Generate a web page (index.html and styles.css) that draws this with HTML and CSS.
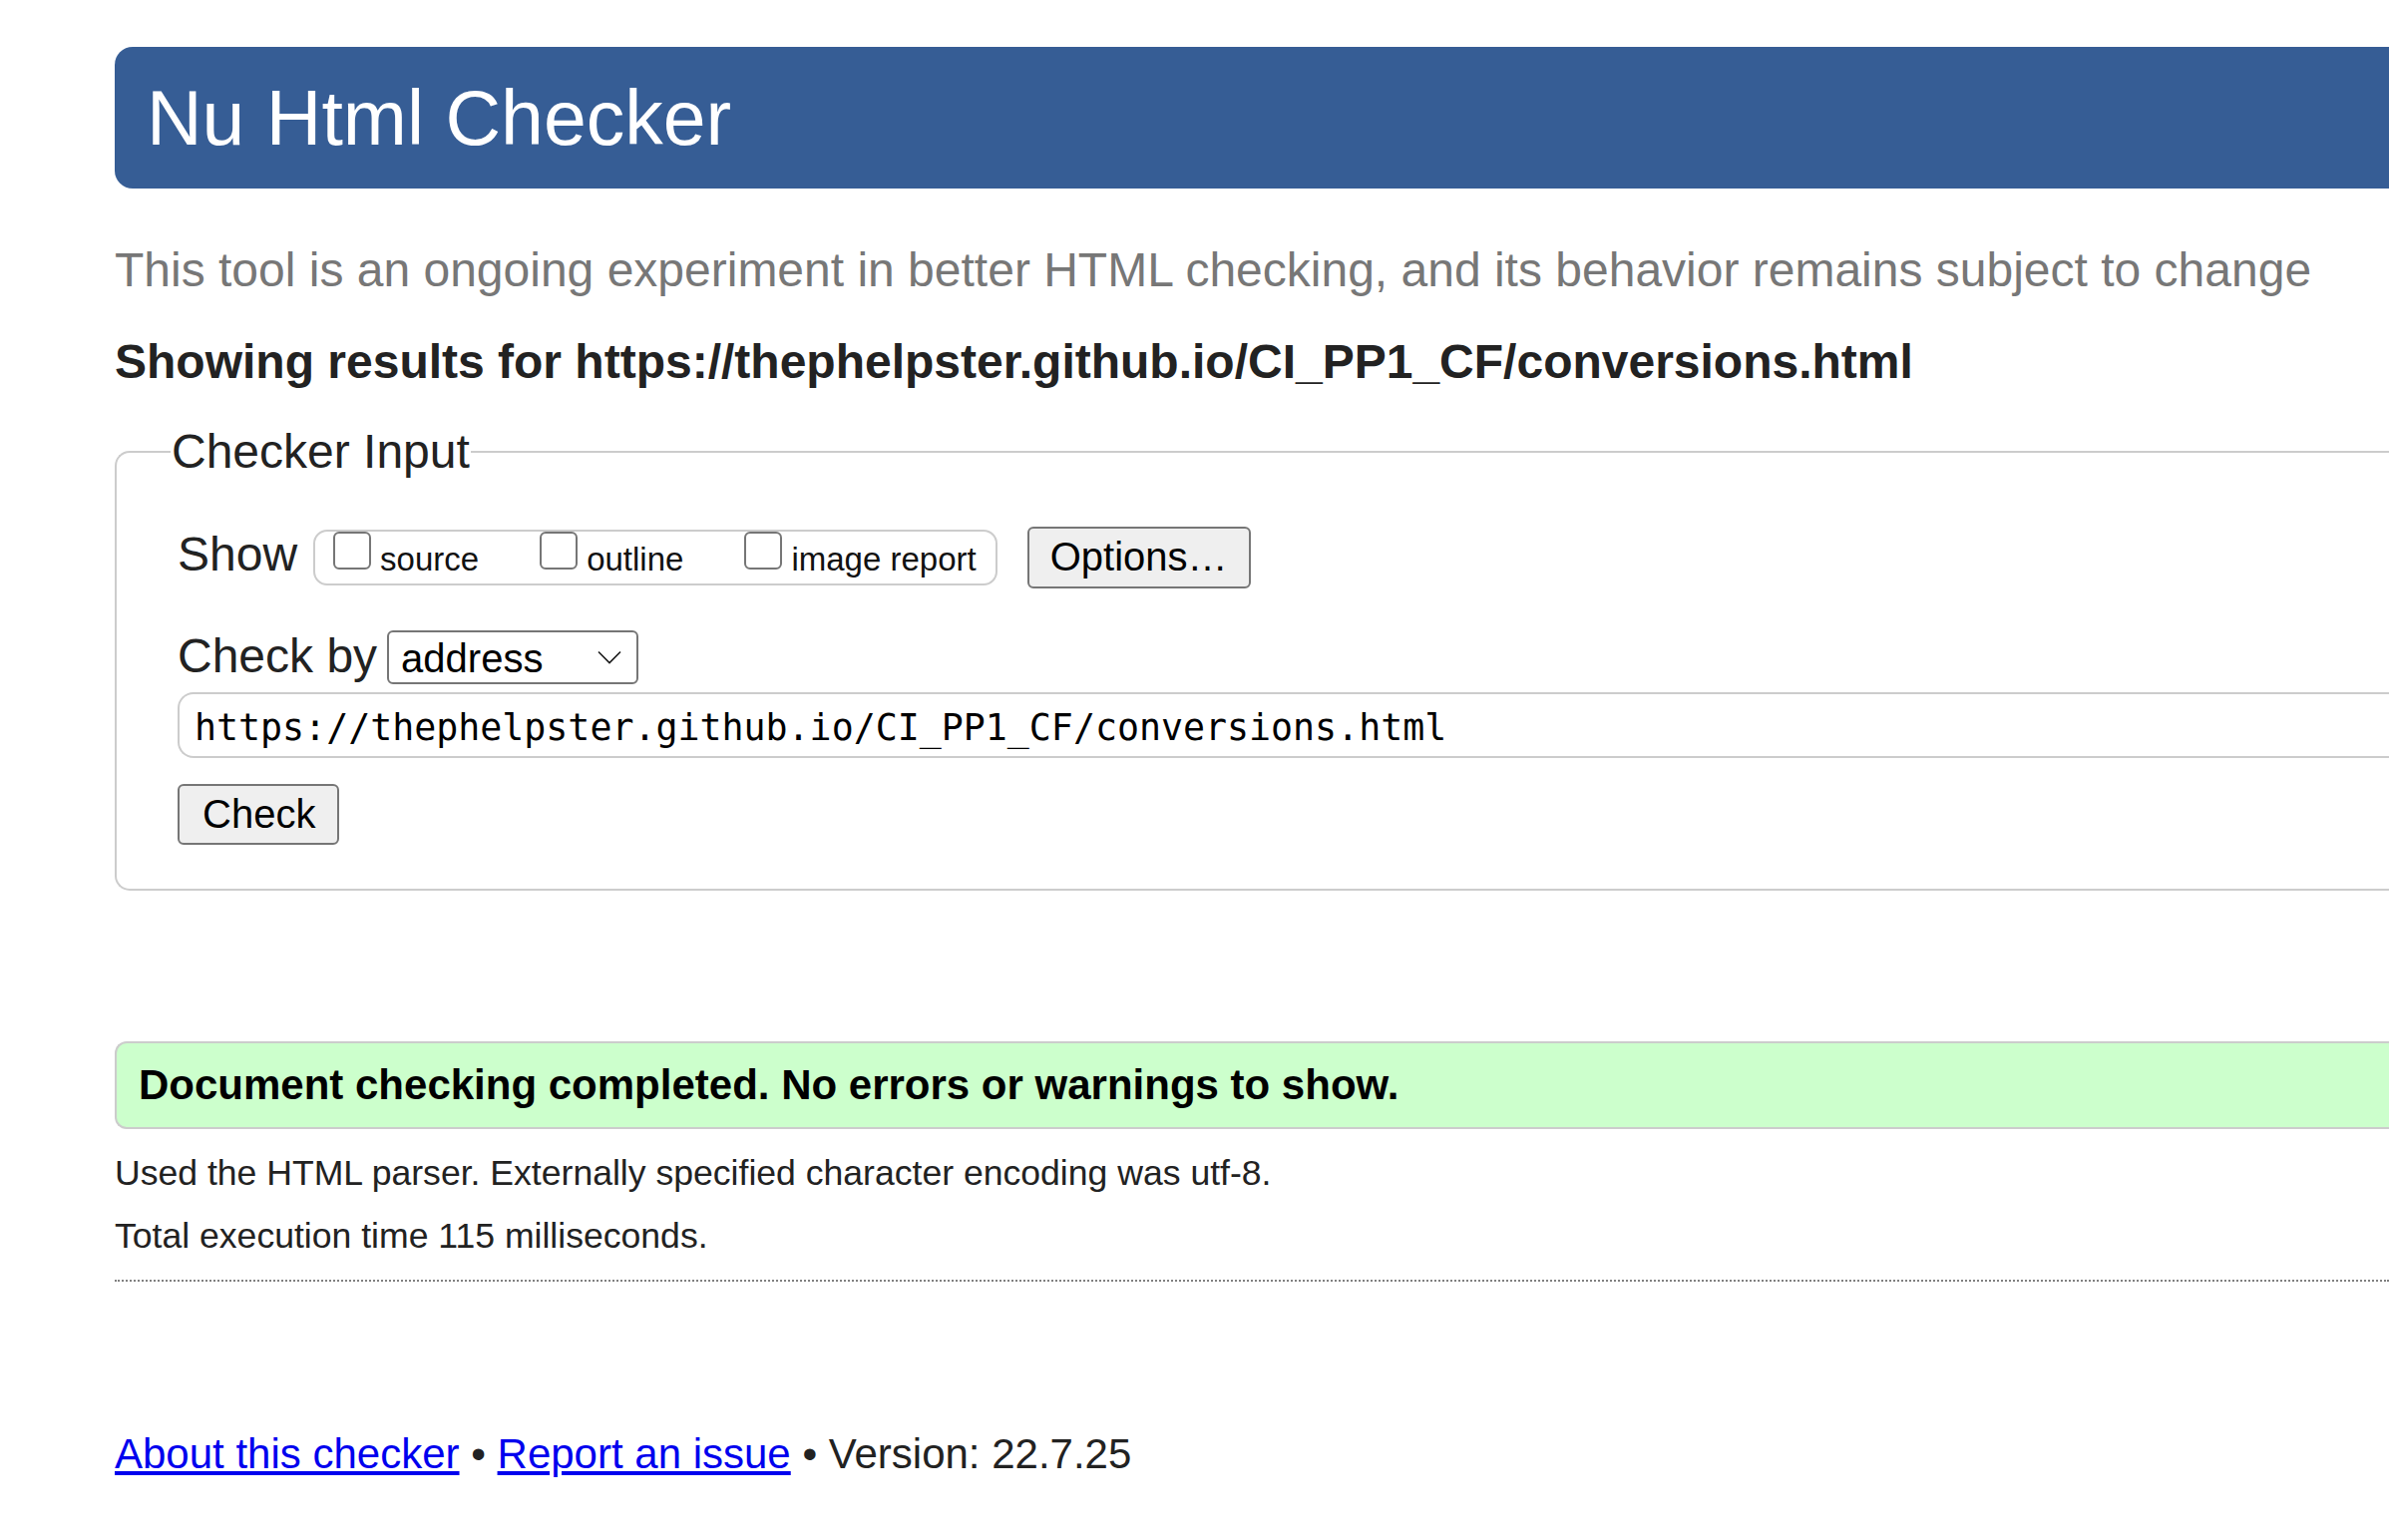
FILE: index.html
```html
<!DOCTYPE html>
<html lang="en">
<head>
<meta charset="utf-8">
<title>Showing results for https://thephelpster.github.io/CI_PP1_CF/conversions.html - Nu Html Checker</title>
<link rel="stylesheet" href="styles.css">
</head>
<body>
<div class="page">
  <h1 class="title">Nu Html Checker</h1>
  <p class="tagline">This tool is an ongoing experiment in better HTML checking, and its behavior remains subject to change</p>
  <h2 class="results-for">Showing results for https://thephelpster.github.io/CI_PP1_CF/conversions.html</h2>
  <form class="checker-form" action="#">
    <fieldset class="checker-input">
      <legend class="legend">Checker Input</legend>
      <div class="row row-show">
        <span class="row-label label-show">Show</span>
        <div class="show-group">
          <label class="show-opt"><input type="checkbox" class="cb"><span class="opt-text">source</span></label>
          <label class="show-opt"><input type="checkbox" class="cb"><span class="opt-text">outline</span></label>
          <label class="show-opt"><input type="checkbox" class="cb"><span class="opt-text">image report</span></label>
        </div>
        <button type="button" class="btn btn-options">Options…</button>
      </div>
      <div class="row row-checkby">
        <span class="row-label label-checkby">Check by</span>
        <div class="select">
          <span class="select-value">address</span>
          <svg class="chevron" width="24" height="14" viewBox="0 0 24 14" aria-hidden="true"><path d="M1 1.5 L12 12.5 L23 1.5" fill="none" stroke="#1a1a1a" stroke-width="1.6"/></svg>
        </div>
      </div>
      <input class="url" type="url" value="https://thephelpster.github.io/CI_PP1_CF/conversions.html">
      <div class="row row-submit">
        <button type="submit" class="btn btn-check">Check</button>
      </div>
    </fieldset>
  </form>
  <div class="success"><p class="success-text">Document checking completed. No errors or warnings to show.</p></div>
  <p class="details details-first">Used the HTML parser. Externally specified character encoding was utf-8.</p>
  <p class="details details-second">Total execution time 115 milliseconds.</p>
  <hr class="sep">
  <p class="footer"><a class="footer-link" href="#">About this checker</a> • <a class="footer-link" href="#">Report an issue</a> • Version: 22.7.25</p>
</div>
</body>
</html>
```
FILE: styles.css
```css
html, body {
  margin: 0;
  padding: 0;
  background: #fff;
}

body {
  font-family: "Liberation Sans", Arial, sans-serif;
  color: #222;
}

.page {
  padding: 47px 0 40px 115px;
}

.title {
  margin: 0;
  background: #365d95;
  color: #fff;
  font-weight: normal;
  font-size: 77px;
  line-height: 87px;
  padding: 28px 0 27px 32px;
  border-radius: 18px 0 0 18px;
  white-space: nowrap;
}

.tagline {
  margin: 54px 0 0;
  color: #777;
  font-size: 48px;
  line-height: 56px;
  white-space: nowrap;
}

.results-for {
  margin: 36px 0 0;
  font-size: 48px;
  line-height: 56px;
  font-weight: bold;
  color: #222;
  white-space: nowrap;
}

.checker-form {
  margin: 0;
}

.checker-input {
  margin: 34px 0 0;
  border: 2px solid #ccc;
  border-right: none;
  border-radius: 15px 0 0 15px;
  padding: 46px 0 44px 61px;
  min-width: 0;
}

.legend {
  font-size: 48px;
  line-height: 56px;
  padding: 0 1px;
  margin-left: -7px;
  color: #222;
}

.row {
  display: flex;
  align-items: flex-start;
}

.row-label {
  font-size: 48px;
  line-height: 56px;
  color: #222;
  white-space: nowrap;
}

.label-show {
  margin-right: 16px;
  margin-top: 1px;
}

.label-checkby {
  margin-right: 10px;
  margin-top: 3px;
}

.show-group {
  display: flex;
  align-items: flex-start;
  gap: 61px;
  height: 52px;
  margin-top: 4px;
  padding: 0 19px 0 18px;
  border: 2px solid #ccc;
  border-radius: 14px;
}

.show-opt {
  display: flex;
  align-items: flex-start;
  gap: 9px;
}

.cb {
  -webkit-appearance: none;
  appearance: none;
  box-sizing: border-box;
  width: 38px;
  height: 38px;
  margin: 0;
  flex: none;
  border: 2px solid #767676;
  border-radius: 6px;
  background: #fff;
}

.opt-text {
  font-size: 33px;
  line-height: 38px;
  margin-top: 9px;
  color: #111;
  white-space: nowrap;
}

.btn {
  font-family: "Liberation Sans", Arial, sans-serif;
  font-size: 40px;
  line-height: 46px;
  color: #000;
  background: #efefef;
  border: 2px solid #767676;
  border-radius: 6px;
  padding: 5px 21px 7px;
  margin: 0;
}

.btn-options {
  margin-left: 30px;
  margin-top: 1px;
}

.row-checkby {
  margin-top: 37px;
}

.select {
  box-sizing: border-box;
  width: 252px;
  height: 54px;
  margin-top: 5px;
  display: flex;
  align-items: center;
  justify-content: space-between;
  padding: 0 15px 0 12px;
  border: 2px solid #767676;
  border-radius: 6px;
  background: #fff;
}

.select-value {
  font-size: 40px;
  line-height: 46px;
  color: #000;
  padding-top: 2px;
}

.chevron {
  display: block;
  flex: none;
}

.url {
  display: block;
  box-sizing: border-box;
  width: 100%;
  height: 66px;
  margin: 8px 0 0;
  padding: 4px 15px 0;
  border: 2px solid #ccc;
  border-right: none;
  border-radius: 16px 0 0 16px;
  font-family: "DejaVu Sans Mono", "Liberation Mono", monospace;
  font-size: 36.6px;
  color: #000;
  background: #fff;
  outline: none;
}

.row-submit {
  margin-top: 26px;
}

.btn-check {
  padding: 5px 22px 6px 23px;
}

.success {
  margin-top: 151px;
  background: #ccffcc;
  border: 2px solid #ccc;
  border-right: none;
  border-radius: 12px 0 0 12px;
  padding: 18px 0 18px 22px;
}

.success-text {
  margin: 0;
  font-size: 42px;
  line-height: 48px;
  font-weight: bold;
  color: #000;
  white-space: nowrap;
}

.details {
  margin: 0;
  font-size: 35.6px;
  line-height: 40px;
  color: #222;
  white-space: nowrap;
}

.details-first {
  margin-top: 24px;
}

.details-second {
  margin-top: 23px;
}

.sep {
  margin: 24px 0 0;
  height: 0;
  border: 0;
  border-top: 2px dotted #808080;
}

.footer {
  margin: 149px 0 0;
  font-size: 42px;
  line-height: 48px;
  color: #222;
  white-space: nowrap;
}

.footer-link {
  color: #0000ee;
  text-decoration: underline;
}
```
